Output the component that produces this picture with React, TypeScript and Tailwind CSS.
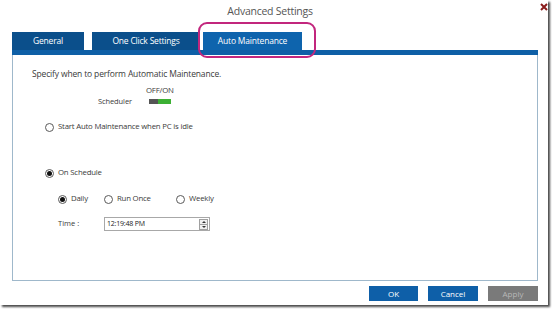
import type { ReactNode } from 'react';

function Radio({ checked }: { checked?: boolean }) {
    return (
        <span className="flex h-[9px] w-[9px] shrink-0 items-center justify-center rounded-full border border-[#5a5a5a] bg-white">
            {checked && <span className="h-[5px] w-[5px] rounded-full bg-[#111]" />}
        </span>
    );
}

function Option({ checked, children }: { checked?: boolean; children: ReactNode }) {
    return (
        <div className="flex items-center gap-[4px]">
            <Radio checked={checked} />
            <span className="text-[7.8px] tracking-[-0.2px]">{children}</span>
        </div>
    );
}

function Tab({ width, active, children }: { width: string; active?: boolean; children: ReactNode }) {
    return (
        <div
            className={`flex h-[18px] items-center justify-center text-[8.5px] tracking-[-0.2px] text-white ${width} ${
                active ? 'bg-[#0e64ad]' : 'bg-[#0b4f8b]'
            }`}
        >
            {children}
        </div>
    );
}

export default function App() {
    return (
        <div className="h-[309px] w-[552px] overflow-hidden bg-white font-['Open_Sans',sans-serif] text-[#3a3a3a]">
            <div className="relative flex h-[305px] w-[548px] flex-col bg-white shadow-[2px_2px_2px_#4a4a4a]">
                {/* Title bar */}
                <div className="flex h-[32px] justify-center pr-[8px] pt-[4px]">
                    <span className="text-[10.5px] tracking-[-0.25px] text-[#555]">Advanced Settings</span>
                </div>
                <svg className="absolute left-[540px] top-[3px]" width="8" height="8" viewBox="0 0 8 8">
                    <path d="M1 1 L7 7 M7 1 L1 7" stroke="#8a1c1c" strokeWidth="2" />
                </svg>

                {/* Tabs */}
                <div className="ml-[12px] flex h-[18px] items-end">
                    <Tab width="w-[72px]">General</Tab>
                    <div className="w-[8px]" />
                    <Tab width="w-[108px]">One Click Settings</Tab>
                    <div className="w-[3px]" />
                    <Tab width="w-[99px]" active>
                        Auto Maintenance
                    </Tab>
                </div>
                <div className="ml-[12px] h-[5px] w-[526px] bg-[#0e5fa6]" />

                {/* Highlight annotation */}
                <div className="absolute left-[198px] top-[22px] h-[36px] w-[118px] rounded-[9px] border-2 border-[#c2267d]" />

                {/* Panel */}
                <div className="ml-[12px] flex h-[226px] w-[526px] flex-col border-x border-b border-[#9fb8cb]">
                    <div className="ml-[19px] mt-[13px] flex h-[13px] items-center text-[8.5px] tracking-[-0.15px]">
                        Specify when to perform Automatic Maintenance.
                    </div>
                    <div className="ml-[133px] mt-[4px] flex h-[12px] items-center text-[7.8px] tracking-[-0.2px]">
                        OFF/ON
                    </div>
                    <div className="flex h-[9px] items-center">
                        <span className="ml-[85px] text-[7.5px] tracking-[-0.1px]">Scheduler</span>
                        <span className="ml-[17px] flex h-[5px] w-[22px]">
                            <span className="w-[9px] bg-[#555]" />
                            <span className="flex-1 bg-[#3cb034]" />
                        </span>
                    </div>

                    <div className="ml-[32px] mt-[15px] flex h-[12px] items-center">
                        <Option>Start Auto Maintenance when PC is idle</Option>
                    </div>

                    <div className="ml-[32px] mt-[34px] flex h-[12px] items-center">
                        <Option checked>On Schedule</Option>
                    </div>

                    <div className="ml-[45px] mt-[14px] flex h-[12px] items-center">
                        <div className="w-[46px]">
                            <Option checked>Daily</Option>
                        </div>
                        <div className="w-[72px]">
                            <Option>Run Once</Option>
                        </div>
                        <Option>Weekly</Option>
                    </div>

                    <div className="ml-[45px] mt-[12px] flex h-[14px] items-center">
                        <span className="w-[46px] text-[7.5px]">Time :</span>
                        <div className="flex h-[14px] w-[106px] items-center justify-between border border-[#a8a8a8] pl-[2px] pr-[1px]">
                            <span className="text-[7px] tracking-[-0.2px] text-[#222]">12:19:48 PM</span>
                            <div className="flex h-[11px] w-[9px] flex-col border border-[#a0a0a0] bg-[#f0f0f0]">
                                <span className="flex flex-1 items-center justify-center">
                                    <span className="h-0 w-0 border-x-[2px] border-b-[2px] border-x-transparent border-b-[#333]" />
                                </span>
                                <span className="h-px bg-[#a0a0a0]" />
                                <span className="flex flex-1 items-center justify-center">
                                    <span className="h-0 w-0 border-x-[2px] border-t-[2px] border-x-transparent border-t-[#333]" />
                                </span>
                            </div>
                        </div>
                    </div>
                </div>

                {/* Footer buttons */}
                <div className="mr-[10px] mt-[5px] flex justify-end gap-[10px] text-[8px]">
                    <button className="h-[15px] w-[49px] bg-[#0e5fa8] text-white">OK</button>
                    <button className="h-[15px] w-[50px] bg-[#0e5fa8] text-white">Cancel</button>
                    <button className="h-[15px] w-[50px] bg-[#7a7a7a] text-[#b8b8b8]">Apply</button>
                </div>
            </div>
        </div>
    );
}
